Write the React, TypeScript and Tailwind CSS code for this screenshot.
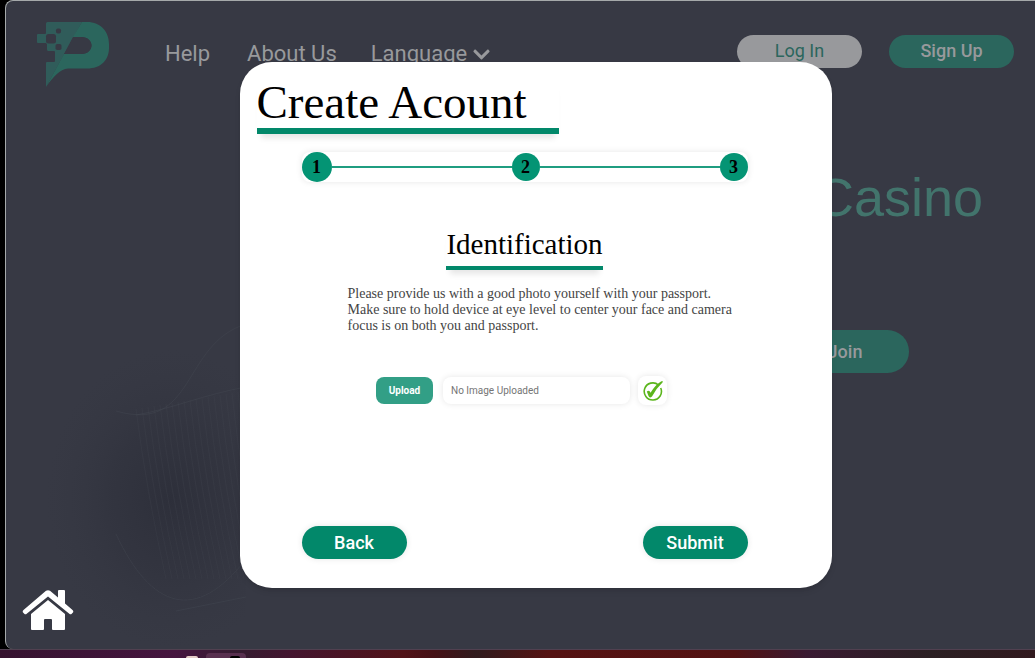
import { FaChevronDown } from "react-icons/fa";

const serif = "font-['Liberation_Serif',serif]";

function Logo() {
  return (
    <svg viewBox="0 0 73 66" className="h-[66px] w-[73px]" aria-label="Home logo" role="img">
      <path
        fill="#305c5a"
        d="M10.500 0H45L9 65V41Q9 40 10 40H17Q18 40 18 39V30Q18 29 17 29H11.500Q10 29 10 27.500V22.500Q10 21 8.500 21H1Q0 21 0 20V13Q0 12 1 12H8Q9 12 9 11V1.500Q9 0 10.500 0Z"
      />
      <path
        fill="#2b665d"
        d="M45 0H50C64 0 72 10 72 22V26C72 38 64 46.500 50 46.500H31C23 47 16 55 9 65L27 32H44C58 32 58 15 44 15H36Z"
      />
      <path fill="#373944" d="M36 15H44C58 15 58 32 44 32H27Z" />
      <g fill="#373944">
        <rect x="9" y="12" width="10" height="9.500" rx="2.500" />
        <rect x="19" y="6.500" width="5" height="5" rx="1.800" />
        <rect x="18.500" y="22" width="6" height="6" rx="1.800" />
      </g>
    </svg>
  );
}

function HouseIcon() {
  return (
    <svg viewBox="0 0 52 41" className="h-[41px] w-[52px]" aria-hidden="true">
      <g fill="#fff">
        <path d="M24 .8Q26 -.5 28 .8L36 7.5V1Q36 0 37 0H42Q43 0 43 1V13.5L50.5 20Q52 21.3 50.7 22.8L49.5 24Q48.5 24.8 47.3 23.8L26 6.5L4.7 23.8Q3.500 24.8 2.500 24L1.300 22.800Q0 21.300 1.500 20Z" />
        <path d="M26 10L43 24V39Q43 40 42 40H31Q30 40 30 39V30Q30 29 29 29H23Q22 29 22 30V39Q22 40 21 40H10Q9 40 9 39V24Z" />
      </g>
    </svg>
  );
}

function Waves() {
  const lines = Array.from({ length: 24 }, (_, i) => i);
  return (
    <svg viewBox="0 0 240 400" className="absolute bottom-0 left-0 h-[400px] w-60" aria-hidden="true">
      <defs>
        <radialGradient id="shade">
          <stop offset="0" stopColor="#2c2e39" stopOpacity="0.9" />
          <stop offset="0.5" stopColor="#2f313c" stopOpacity="0.55" />
          <stop offset="1" stopColor="#343641" stopOpacity="0" />
        </radialGradient>
      </defs>
      <ellipse cx="165" cy="250" rx="125" ry="150" fill="url(#shade)" />
      <g fill="none" stroke="#42454f" strokeOpacity="0.5">
        <path d="M110 162C190 185 175 95 240 75M130 166C165 160 200 145 240 138M110 285C145 360 190 375 240 310M170 362L240 348" />
        {lines.map((i) => (
          <path key={i} strokeOpacity="0.3" d={`M${130 + i * 6} ${160 - i}Q${140 + i * 6} 240 ${160 + i * 6} 330`} />
        ))}
      </g>
    </svg>
  );
}

function Step({ n, className }: { n: number; className: string }) {
  return (
    <li className={`flex items-center justify-center rounded-full bg-[#049474] text-lg font-bold leading-none text-black ${className}`}>
      {n}
    </li>
  );
}

export default function App() {
  return (
    <div className="flex min-h-screen flex-col bg-black font-[Roboto,sans-serif]">
      <div className="flex grow pl-[5px]">
        <div className="relative flex grow flex-col overflow-hidden rounded-l-lg border-l border-t border-[#a5a9aa] bg-[#373944]">
          <Waves />
          <header className="flex items-start pl-[31px] pr-[21px] pt-[21px]">
            <Logo />
            <nav className="ml-[55px] flex pt-4 text-[22px] leading-8 text-[#98999c]">
              <a href="#help">Help</a>
              <a href="#about" className="ml-[37px]">About Us</a>
              <button type="button" className="ml-[34px] flex items-center gap-[5px]">
                Language
                <FaChevronDown className="size-[19px]" />
              </button>
            </nav>
            <div className="ml-auto flex gap-[27px] pt-[13px] text-lg leading-[30px]">
              <button type="button" className="h-[33px] w-[125px] rounded-full bg-[#98999c] pb-0.5 text-[#2b665d]">Log In</button>
              <button type="button" className="h-[33px] w-[125px] rounded-full bg-[#2b665d] pb-0.5 font-medium text-[#98999c]">Sign Up</button>
            </div>
          </header>

          <section className="flex grow flex-col items-end pr-[52px] pt-[77px]">
            <h2 className="font-['Liberation_Sans',sans-serif] text-[54px] leading-[64px] text-[#42746c]">Casino</h2>
            <button type="button" className="mr-[74px] mt-[101px] h-[43px] w-32 rounded-full bg-[#2b665d] text-lg font-medium text-[#98999c]">Join</button>
          </section>

          <a href="#home" aria-label="Home" className="relative mb-[18px] ml-4 self-start">
            <HouseIcon />
          </a>

          <div className="absolute inset-0 flex items-center justify-center pl-[30px]">
            <main
              role="dialog"
              aria-labelledby="dialog-title"
              className="flex min-h-[526px] w-[592px] max-w-full flex-col rounded-[32px] bg-white px-[17px] pb-[29px] pt-[17px] shadow-md"
            >
              <h1
                id="dialog-title"
                className={`${serif} w-[302px] border-b-6 border-[#02886a] pb-[3px] text-[47px] leading-[46px] text-black shadow-[0_8px_6px_-4px_#0000001a]`}
              >
                Create Acount
              </h1>

              <div className="flex grow flex-col pl-[45px] pr-[67px] pt-[18px]">
                <ol className={`${serif} flex h-[30px] items-center rounded-lg shadow-[0_0_6px_#0000001a]`}>
                  <Step n={1} className="size-[30px]" />
                  <li aria-hidden="true" className="h-0.5 grow bg-[#1f9d80]" />
                  <Step n={2} className="size-7" />
                  <li aria-hidden="true" className="h-0.5 grow bg-[#1f9d80]" />
                  <Step n={3} className="size-7" />
                </ol>

                <h2 className={`${serif} mt-[46px] self-center border-b-4 border-[#02886a] pb-1.5 text-[29px] leading-8 text-black shadow-[0_8px_6px_-4px_#0000001a]`}>
                  Identification
                </h2>
                <p className={`${serif} mt-4 whitespace-nowrap pl-[46px] text-sm leading-4 text-[#444]`}>
                  Please provide us with a good photo yourself with your passport.
                  <br />
                  Make sure to hold device at eye level to center your face and camera
                  <br />
                  focus is on both you and passport.
                </p>

                <div className="mt-[42px] flex items-center justify-center pr-1.5 text-[10px]">
                  <button type="button" className="h-[27px] w-[57px] rounded-lg bg-[#329f86] font-bold text-white">Upload</button>
                  <input
                    type="text"
                    readOnly
                    aria-label="Uploaded image"
                    placeholder="No Image Uploaded"
                    className="ml-2.5 h-[27px] w-[187px] rounded-lg px-2 shadow-[0_0_6px_#0000001a] placeholder:text-[#757575]"
                  />
                  <span className="ml-2 flex size-[29px] items-center justify-center rounded-lg shadow-[0_0_6px_#0000001a]">
                    <svg viewBox="0 0 20 20" className="size-5" aria-hidden="true">
                      <path d="M15.500 4A8.600 8.600 0 1 0 17.700 7" fill="none" stroke="#5bb51c" strokeWidth="1.600" />
                      <path d="M3.800 10.500Q6.500 8.500 7.500 11.800Q12 4 18 .4Q20.500 -.5 19.500 1.500Q13 7.500 9 15.500Q6.500 17.500 5.500 15Z" fill="#5bb51c" />
                    </svg>
                  </span>
                </div>

                <div className="mt-auto flex justify-between text-lg font-medium text-white">
                  <button type="button" className="h-[33px] w-[105px] rounded-full bg-[#02886a] shadow-[0_0_6px_#0000001a]">Back</button>
                  <button type="button" className="h-[33px] w-[105px] rounded-full bg-[#02886a] shadow-[0_0_6px_#0000001a]">Submit</button>
                </div>
              </div>
            </main>
          </div>
        </div>
      </div>
      <footer className="flex h-[9px] items-end overflow-hidden border-t border-[#514050] bg-[linear-gradient(90deg,#35132f_0%,#45153f_17%,#341c30_23%,#43152f_28%,#511318_39%,#451116_42%,#301b1d_46%,#551313_53%,#521212_71%,#391a32_78%,#2b2023_90%,#31191e_100%)] pl-[186px]">
        <span className="h-0.5 w-3 rounded-t-full bg-[#e5cdc8]" />
        <span className="ml-2 flex h-[5px] w-10 items-end justify-end rounded-t bg-[#58304f] pr-1.5">
          <span className="h-0.5 w-2.5 rounded-t-full bg-black" />
        </span>
      </footer>
    </div>
  );
}
